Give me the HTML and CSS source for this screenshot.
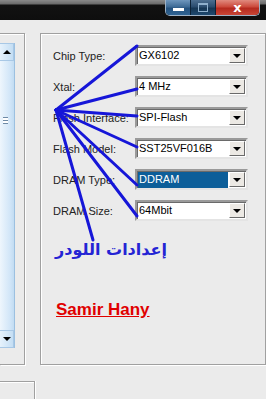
FILE: index.html
```html
<!DOCTYPE html>
<html lang="en">
<head>
  <meta charset="UTF-8">
  <title>Loader Settings</title>
  <link rel="stylesheet" href="styles.css">
</head>
<body>

  <!-- Title bar -->
  <div class="titlebar">
    <div class="caption-buttons">
      <span class="cap-btn min"><i></i></span>
      <span class="cap-btn max"><i></i></span>
      <span class="cap-btn close">x</span>
    </div>
  </div>

  <div class="client">
    <!-- Left list panel -->
    <div class="side-panel">
      <div class="scrollbar">
        <div class="sb-btn up"><i></i></div>
        <div class="sb-thumb"><span class="grip"></span></div>
        <div class="sb-btn down"><i></i></div>
      </div>
    </div>

    <!-- Settings group -->
    <div class="settings">
      <div class="fields">
        <label>Chip Type:</label>
        <div class="combo"><span class="value">GX6102</span><span class="drop"></span></div>

        <label>Xtal:</label>
        <div class="combo"><span class="value">4 MHz</span><span class="drop"></span></div>

        <label>Flash Interface:</label>
        <div class="combo"><span class="value">SPI-Flash</span><span class="drop"></span></div>

        <label>Flash Model:</label>
        <div class="combo"><span class="value">SST25VF016B</span><span class="drop"></span></div>

        <label>DRAM Type:</label>
        <div class="combo"><span class="value selected">DDRAM</span><span class="drop"></span></div>

        <label>DRAM Size:</label>
        <div class="combo"><span class="value">64Mbit</span><span class="drop"></span></div>
      </div>

      <div class="loader-title"><span dir="rtl">إعدادات اللودر</span></div>
      <div class="author">Samir Hany</div>
    </div>
  </div>

  <div class="status-box"></div>

  <!-- Annotation lines drawn over the form -->
  <svg class="callouts" width="266" height="399" viewBox="0 0 266 399">
    <g stroke="#1616d8" stroke-width="3" stroke-linecap="round">
      <line x1="56" y1="110" x2="137" y2="46"/>
      <line x1="56" y1="110" x2="137" y2="89"/>
      <line x1="56" y1="110" x2="137" y2="116"/>
      <line x1="56" y1="110" x2="137" y2="147"/>
      <line x1="56" y1="110" x2="137" y2="185"/>
      <line x1="56" y1="110" x2="137" y2="216"/>
      <line x1="56" y1="110" x2="93" y2="240"/>
    </g>
  </svg>

</body>
</html>
```

FILE: styles.css
```css
body {
  margin: 0;
  width: 266px;
  height: 399px;
  overflow: hidden;
  background: #ebebeb;
  font-family: "Liberation Sans", Arial, sans-serif;
  font-size: 11px;
  color: #000;
  position: relative;
}

/* Title bar */
.titlebar {
  height: 20px;
  background: linear-gradient(#8a8a8a 0, #6a6a6a 4px, #121212 5px, #0e0e0e 100%);
  display: flex;
  justify-content: flex-end;
  padding-right: 6px;
}

.caption-buttons {
  display: flex;
  height: 15px;
  border: 1px solid #9fb3c6;
  border-top: none;
  border-radius: 0 0 5px 5px;
  overflow: hidden;
}

.cap-btn {
  display: flex;
  align-items: center;
  justify-content: center;
  height: 15px;
  border-right: 1px solid #0d2236;
}

.cap-btn.min {
  width: 24px;
  background: linear-gradient(#6f97bd, #3e6b96 45%, #25527e 55%, #2f6494);
}

.cap-btn.min i {
  width: 11px;
  height: 3px;
  margin-top: 4px;
  background: #fff;
}

.cap-btn.max {
  width: 24px;
  background: linear-gradient(#4d6f90, #2a4c6e 45%, #153653 55%, #1f4a70);
}

.cap-btn.max i {
  width: 8px;
  height: 6px;
  border: 1px solid #8fb0cc;
  border-top-width: 2px;
}

.cap-btn.close {
  width: 43px;
  border-right: none;
  background: linear-gradient(#e08a7e, #cc4a3c 45%, #b52a1e 55%, #c84636);
  color: #fff;
  font-family: "DejaVu Sans", sans-serif;
  font-weight: bold;
  font-size: 13px;
  line-height: 13px;
}

/* Main area */
.client {
  display: flex;
  gap: 15px;
  padding-top: 13px;
}

.side-panel {
  width: 24px;
  height: 321px;
  border: 1px solid #a0a0a0;
  border-left: none;
  box-shadow: 1px 1px 0 #fff, inset 0 1px 0 #fff;
  padding-top: 9px;
}

.scrollbar {
  width: 14px;
  height: 305px;
  border-right: 1px solid #9cc0e0;
  display: flex;
  flex-direction: column;
}

.sb-btn {
  height: 16px;
  border: 1px solid #a8c8e6;
  border-left: none;
  background: linear-gradient(90deg, #e6f2fc, #c4def4);
  display: flex;
  align-items: center;
  justify-content: center;
}

.sb-btn i {
  width: 0;
  height: 0;
  border-left: 4px solid transparent;
  border-right: 4px solid transparent;
}

.sb-btn.up i {
  border-bottom: 4px solid #000;
}

.sb-btn.down i {
  border-top: 4px solid #000;
}

.sb-thumb {
  flex: 1;
  background: linear-gradient(90deg, #eef6fd, #d2e6f8 70%, #c2dcf2);
  padding-top: 56px;
}

.grip {
  display: block;
  width: 5px;
  height: 5px;
  margin-left: 3px;
  border-top: 1px solid #6e8aa6;
  border-bottom: 1px solid #6e8aa6;
  background: linear-gradient(#fff 0, #fff 2px, #6e8aa6 2px, #6e8aa6 3px, #fff 3px);
}

/* Settings group box */
.settings {
  width: 212px;
  height: 319px;
  border: 1px solid #a0a0a0;
  box-shadow: 1px 1px 0 #fff, inset 1px 1px 0 #fff;
  padding: 11px 0 0 12px;
}

.fields {
  display: grid;
  grid-template-columns: 82px 113px;
  row-gap: 10px;
  align-items: center;
}

.fields label {
  color: #222;
  white-space: nowrap;
}

.combo {
  height: 16px;
  display: flex;
  border: 2px solid;
  border-color: #9a9a9a #e4e4e4 #e4e4e4 #9a9a9a;
  box-shadow: inset 1px 1px 0 #6a6a6a;
  background: #fff;
  padding: 1px 1px 0 1px;
}

.combo .value {
  flex: 1;
  line-height: 15px;
  padding-left: 1px;
  white-space: nowrap;
}

.combo .value.selected {
  background: #0c5e99;
  color: #fff;
  margin-right: 1px;
}

.combo .drop {
  width: 14px;
  height: 13px;
  background: #ece9e4;
  border: 1px solid;
  border-color: #fff #6a6a6a #6a6a6a #fff;
  display: flex;
  align-items: center;
  justify-content: center;
}

.combo .drop::after {
  content: "";
  border-left: 4px solid transparent;
  border-right: 4px solid transparent;
  border-top: 4px solid #000;
}

.loader-title {
  margin-top: 18px;
  padding-left: 2px;
  font-family: "DejaVu Sans", sans-serif;
  font-weight: bold;
  font-size: 16px;
  line-height: 22px;
  color: #2424d4;
  white-space: nowrap;
}

.author {
  margin-top: 39px;
  padding-left: 3px;
  font-weight: bold;
  font-size: 17px;
  line-height: 20px;
  color: #e00000;
  text-decoration: underline;
}

/* Status area below */
.status-box {
  margin-top: 16px;
  width: 34px;
  height: 20px;
  border-top: 1px solid #a0a0a0;
  border-right: 1px solid #a0a0a0;
  box-shadow: 1px 0 0 #fff, inset 0 1px 0 #fff;
}

/* Overlay annotation */
.callouts {
  position: absolute;
  top: 0;
  left: 0;
  pointer-events: none;
}
```
